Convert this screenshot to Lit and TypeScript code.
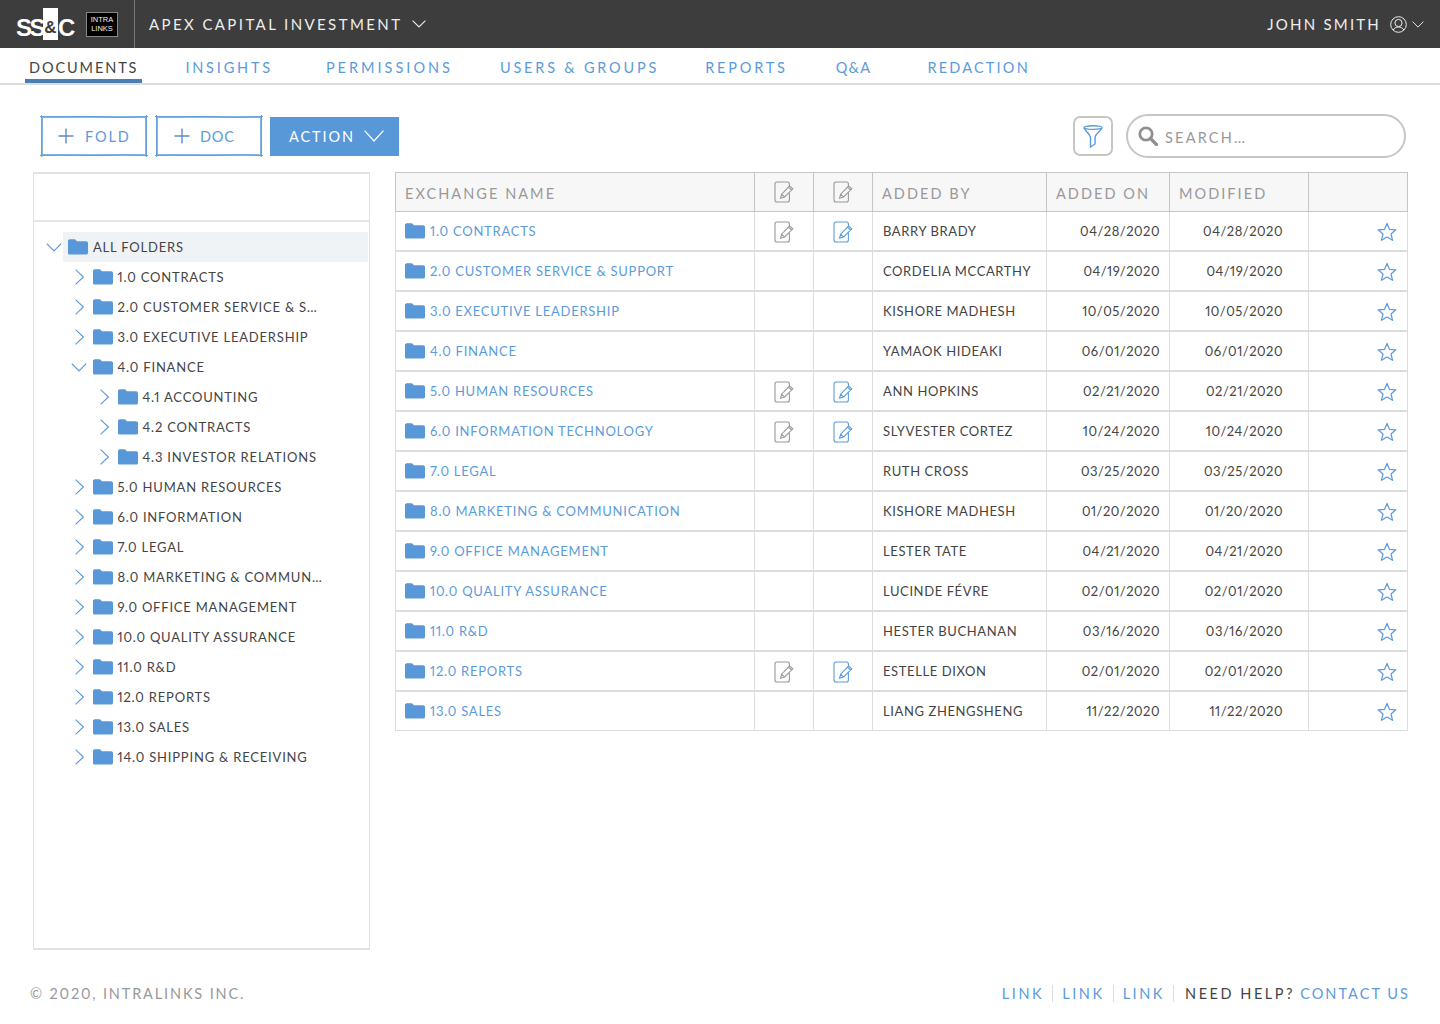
import { LitElement, html, css } from "lit";
import { customElement } from "lit/decorators.js";

const chevDown = (w = 14, h = 8) => html`<svg class="chev" width=${w} height=${h} viewBox="0 0 14 8"><path d="M.6.6 7 7 13.4.6" fill="none" stroke="currentColor" stroke-width="1.1"/></svg>`;
const folder = html`<svg class="folder" width="20" height="16" viewBox="0 0 20 16"><path d="M0 2.2C0 1 .8.3 1.8.3h4.6c.7 0 1 .3 1.4.8l1 1.1h9.3c1.2 0 1.9.8 1.9 1.9v9.6c0 1.2-.8 1.9-1.9 1.9H1.7C.7 15.6 0 15 0 14z" fill="#5898d8"/></svg>`;
const noteIcon = (c: string) => html`<svg class="note" width="20" height="22" viewBox="0 0 20 22" fill="none" stroke=${c} stroke-width="1.1"><path d="M15.4 5V3a2 2 0 0 0-2-2H3a2 2 0 0 0-2 2v16a2 2 0 0 0 2 2h10.4a2 2 0 0 0 2-2v-7"/><path d="M6.6 17.2l1-4L15.6 5l3.2 2.8-8.2 8.2zM7.6 13.2l3 3M14.4 6.2l3.2 2.8"/></svg>`;
const star = html`<svg class="star" width="20" height="20" viewBox="0 0 20 20"><path d="M10 1.4l2.5 5.9 6.4.5-4.9 4.2 1.6 6.3L10 15l-5.6 3.3L6 12 1.1 7.8l6.4-.5z" fill="none" stroke="#5b9bdc" stroke-width="1.2" stroke-linejoin="round"/></svg>`;
const plus = html`<svg width="16" height="16" viewBox="0 0 16 16"><path d="M8 .5v15M.5 8h15" stroke="#5b8fc4" stroke-width="1.4"/></svg>`;
// Hand-drawn outline laid over a button's border: each side overshoots its corners a little.
const sketch = html`<svg class="sketch" viewBox="0 0 106 40" preserveAspectRatio="none" fill="none" stroke="#5b9bdc" stroke-width="1"><path d="M-1 .6C20 1.4 40-.2 62 .8s30 .2 45-.2M.6-1C1.2 10 .2 24 .8 41M105.400-1c-.6 14 .4 27-.2 42M-1 39.400c24-.8 50 .6 72-.2s24 .2 36 .4"/></svg>`;

// label, active, letter-spacing, gap to the next tab
const tabs: [string, boolean, number, number][] = [
  ["DOCUMENTS", true, 1.9, 39],
  ["INSIGHTS", false, 2.8, 45],
  ["PERMISSIONS", false, 3.0, 39],
  ["USERS & GROUPS", false, 2.8, 38],
  ["REPORTS", false, 2.8, 40],
  ["Q&A", false, 1.2, 48],
  ["REDACTION", false, 2.2, 0],
];

type Tree = { label: string; level: number; open?: boolean; sel?: boolean };
const tree: Tree[] = [
  { label: "ALL FOLDERS", level: 0, open: true, sel: true },
  { label: "1.0 CONTRACTS", level: 1 },
  { label: "2.0 CUSTOMER SERVICE & S…", level: 1 },
  { label: "3.0 EXECUTIVE LEADERSHIP", level: 1 },
  { label: "4.0 FINANCE", level: 1, open: true },
  { label: "4.1 ACCOUNTING", level: 2 },
  { label: "4.2 CONTRACTS", level: 2 },
  { label: "4.3 INVESTOR RELATIONS", level: 2 },
  { label: "5.0 HUMAN RESOURCES", level: 1 },
  { label: "6.0 INFORMATION", level: 1 },
  { label: "7.0 LEGAL", level: 1 },
  { label: "8.0 MARKETING & COMMUN…", level: 1 },
  { label: "9.0 OFFICE MANAGEMENT", level: 1 },
  { label: "10.0 QUALITY ASSURANCE", level: 1 },
  { label: "11.0 R&D", level: 1 },
  { label: "12.0 REPORTS", level: 1 },
  { label: "13.0 SALES", level: 1 },
  { label: "14.0 SHIPPING & RECEIVING", level: 1 },
];

const rows: [string, boolean, string, string][] = [
  ["1.0 CONTRACTS", true, "BARRY BRADY", "04/28/2020"],
  ["2.0 CUSTOMER SERVICE & SUPPORT", false, "CORDELIA MCCARTHY", "04/19/2020"],
  ["3.0 EXECUTIVE LEADERSHIP", false, "KISHORE MADHESH", "10/05/2020"],
  ["4.0 FINANCE", false, "YAMAOK HIDEAKI", "06/01/2020"],
  ["5.0 HUMAN RESOURCES", true, "ANN HOPKINS", "02/21/2020"],
  ["6.0 INFORMATION TECHNOLOGY", true, "SLYVESTER CORTEZ", "10/24/2020"],
  ["7.0 LEGAL", false, "RUTH CROSS", "03/25/2020"],
  ["8.0 MARKETING & COMMUNICATION", false, "KISHORE MADHESH", "01/20/2020"],
  ["9.0 OFFICE MANAGEMENT", false, "LESTER TATE", "04/21/2020"],
  ["10.0 QUALITY ASSURANCE", false, "LUCINDE FÉVRE", "02/01/2020"],
  ["11.0 R&D", false, "HESTER BUCHANAN", "03/16/2020"],
  ["12.0 REPORTS", true, "ESTELLE DIXON", "02/01/2020"],
  ["13.0 SALES", false, "LIANG ZHENGSHENG", "11/22/2020"],
];

@customElement("app-root")
export class AppRoot extends LitElement {
  static styles = css`
    :host { display: flex; flex-direction: column; width: 1440px; height: 1024px; background: #fff; color: #444; font-family: "Lato", "Open Sans", sans-serif; font-variant-numeric: proportional-nums; overflow: hidden; }
    svg { display: block; flex: none; }

    .top { height: 48px; background: #3d3d3d; color: #eee; display: flex; align-items: center; flex: none; }
    .logo { height: 48px; display: flex; align-items: center; padding-left: 16px; box-sizing: border-box; border-right: 1px solid #777; flex: none; width: 135px; }
    .ssc { display: flex; align-items: center; height: 32px; color: #fff; font: 700 24px/32px "Liberation Sans", sans-serif; }
    .ss { width: 27px; letter-spacing: -2.4px; padding-top: 7px; }
    .c { width: 17px; padding-top: 7px; }
    .amp { width: 15px; height: 32px; background: #fff; color: #3d3d3d; font-size: 17px; padding-top: 7px; box-sizing: border-box; display: flex; align-items: center; justify-content: center; }
    .il { width: 32px; height: 25px; box-sizing: border-box; margin-left: 11px; background: #000; border: 1px solid #888; color: #eee; font: 400 7.5px/9px "Liberation Sans", sans-serif; text-align: center; display: flex; align-items: center; justify-content: center; }
    .org { margin-left: 14px; font-size: 15px; letter-spacing: 2.4px; }
    .org-chev { margin-left: 10px; }
    .user { margin-left: auto; display: flex; align-items: center; padding-right: 16px; font-size: 15px; letter-spacing: 2.2px; }
    .avatar { margin-left: 9px; }
    .user .chev { margin-left: 5px; width: 12px; }

    .nav { height: 37px; box-sizing: border-box; border-bottom: 2px solid #ddd; display: flex; flex: none; padding-left: 25px; }
    .tab { height: 35px; box-sizing: border-box; padding: 4px 4px 0; display: flex; align-items: center; font-size: 14.5px; color: #5b9bdc; white-space: nowrap; }
    .tab.on { color: #444; border-bottom: 4px solid #4a7fb5; padding-top: 7px; }

    .bar { display: flex; align-items: center; height: 44px; margin-top: 29px; padding: 0 34px 0 41px; flex: none; }
    .btn { position: relative; width: 106px; height: 40px; box-sizing: border-box; border: 2px solid #8dbce9; margin-right: 9px; padding-left: 15px; display: flex; align-items: center; gap: 11px; color: #5b9bdc; font-size: 14.5px; letter-spacing: 1.9px; }
    .sketch { position: absolute; left: -2px; top: -2px; width: calc(100% + 4px); height: calc(100% + 4px); overflow: visible; pointer-events: none; }
    .btn.doc { padding-left: 16px; gap: 10px; letter-spacing: 0.8px; }
    .btn.act { width: 129px; height: 39px; margin-left: -1px; margin-right: 0; padding-left: 17px; background: #5898d8; border-color: #5898d8; color: #fff; gap: 9px; }
    .filter { margin-left: auto; width: 40px; height: 40px; box-sizing: border-box; border: 2px solid #c6c6c6; border-radius: 7px; display: flex; align-items: center; justify-content: center; }
    .search { width: 280px; height: 44px; margin-left: 13px; box-sizing: border-box; border: 2px solid #c6c6c6; border-radius: 22px; display: flex; align-items: center; padding-left: 10px; color: #999; font-size: 14.5px; letter-spacing: 2.2px; gap: 7px; }
    .search span { padding-top: 2px; }

    .main { display: flex; align-items: flex-start; margin-top: 14px; padding-left: 33px; flex: none; }
    .side { width: 337px; height: 778px; box-sizing: border-box; border: 1px solid #e2e2e2; border-top-width: 2px; border-bottom-width: 2px; flex: none; }
    .side-head { height: 46px; border-bottom: 2px solid #e6e6e6; }
    .tree { padding-top: 10px; }
    .node { height: 30px; display: flex; align-items: center; font-size: 13px; letter-spacing: 0.8px; color: #444; position: relative; }
    .node .ch { width: 16px; display: flex; justify-content: center; color: #5b9bdc; flex: none; }
    .node .folder { margin-left: 6px; }
    .node .lbl { margin-left: 5px; white-space: nowrap; }
    .l1 .lbl, .l2 .lbl { margin-left: 4.5px; }
    .l0 { padding-left: 12px; }
    .l1 { padding-left: 37px; }
    .l2 { padding-left: 62px; }
    .sel::before { content: ""; position: absolute; left: 29px; right: 1px; top: 0; bottom: 0; background: #f0f3f6; }
    .sel > * { position: relative; }

    table { margin-left: 25px; width: 1012px; border-collapse: collapse; table-layout: fixed; }
    th { height: 39px; box-sizing: border-box; background: #f7f7f7; border: 1px solid #c6c6c6; font-weight: 400; text-align: left; color: #999; font-size: 14.5px; letter-spacing: 2.05px; padding: 2px 0 0 9px; }
    td { height: 40px; box-sizing: border-box; border: 1px solid #ddd; border-bottom-width: 2px; padding: 0 0 0 10px; font-size: 13px; letter-spacing: 0.6px; white-space: nowrap; color: #444; }
    tbody tr:first-child td { height: 39px; padding-top: 1px; }
    tr:last-child td { border-bottom-width: 1px; }
    td.nm { padding-left: 9px; letter-spacing: 0.75px; }
    .name { display: flex; align-items: center; gap: 5px; color: #5b9bdc; }
    .ic svg { margin: 0 auto; }
    th.ic, td.ic { padding: 0; }
    td.ic svg, td.st svg { margin-top: 2px; }
    td.d1 { text-align: right; padding: 0 9px 0 0; letter-spacing: 0.5px; }
    td.d2 { text-align: right; padding: 0 25px 0 0; letter-spacing: 0.5px; }
    td.st { padding: 0 10px 0 0; }
    td.st svg { margin-left: auto; }

    .foot { margin-top: auto; height: 62px; display: flex; align-items: flex-start; padding: 23px 30px 0; font-size: 14.5px; letter-spacing: 2.55px; box-sizing: border-box; flex: none; }
    .copy { color: #999; letter-spacing: 1.85px; }
    .links { margin-left: auto; display: flex; align-items: center; color: #5b9bdc; }
    .links .lk { padding-right: 8px; margin-right: 9px; border-right: 1px solid #ddd; }
    .links .help { color: #444; margin: 0 5px 0 2px; }
    .links .contact { letter-spacing: 2.05px; }
  `;

  render() {
    return html`
      <header class="top">
        <div class="logo">
          <div class="ssc"><span class="ss">SS</span><span class="amp">&amp;</span><span class="c">C</span></div>
          <div class="il"><span>INTRA<br />LINKS</span></div>
        </div>
        <div class="org">APEX CAPITAL INVESTMENT</div>
        <div class="org-chev">${chevDown()}</div>
        <div class="user">
          <span>JOHN SMITH</span>
          <svg class="avatar" width="17" height="17" viewBox="0 0 17 17" fill="none" stroke="#eee" stroke-width="1"><circle cx="8.5" cy="8.5" r="7.8"/><circle cx="8.5" cy="7" r="3.6"/><path d="M3.2 14c1-2 3-3 5.3-3s4.3 1 5.3 3"/></svg>
          ${chevDown(12, 7)}
        </div>
      </header>
      <nav class="nav">
        ${tabs.map(([t, on, ls, gap]) => html`<div class="tab ${on ? "on" : ""}" style="letter-spacing:${ls}px;margin-right:${gap}px">${t}</div>`)}
      </nav>
      <div class="bar">
        <div class="btn">${plus}<span>FOLD</span>${sketch}</div>
        <div class="btn doc">${plus}<span>DOC</span>${sketch}</div>
        <div class="btn act"><span>ACTION</span><svg width="20" height="12" viewBox="0 0 20 12"><path d="M.6.6 10 11 19.4.6" fill="none" stroke="#fff" stroke-width="1.2"/></svg></div>
        <div class="filter"><svg width="20" height="23" viewBox="0 0 20 23" fill="none" stroke="#5b9bdc" stroke-width="1.4"><ellipse cx="10" cy="2.6" rx="9" ry="1.8"/><path d="M1 3c2 4 6.5 6 6.5 10v9l4.5-3v-6c0-4 5-6 7-10"/></svg></div>
        <div class="search">
          <svg width="20" height="20" viewBox="0 0 20 20" fill="none" stroke="#8f8f8f"><circle cx="8" cy="8" r="6.2" stroke-width="2.8"/><path d="M12.5 12.5 18.5 18.5" stroke-width="3.2" stroke-linecap="round"/></svg>
          <span>SEARCH…</span>
        </div>
      </div>
      <div class="main">
        <aside class="side">
          <div class="side-head"></div>
          <div class="tree">
            ${tree.map((n) => html`<div class="node l${n.level} ${n.sel ? "sel" : ""}">
              <span class="ch">${n.open ? chevDown(16, 9) : html`<svg width="9" height="16" viewBox="0 0 9 16"><path d="M.6.6 8.4 8 .6 15.4" fill="none" stroke="currentColor" stroke-width="1.1"/></svg>`}</span>
              ${folder}<span class="lbl">${n.label}</span></div>`)}
          </div>
        </aside>
        <table>
          <colgroup><col style="width:359px" /><col style="width:59px" /><col style="width:59px" /><col style="width:174px" /><col style="width:123px" /><col style="width:139px" /><col style="width:99px" /></colgroup>
          <thead>
            <tr>
              <th>EXCHANGE NAME</th>
              <th class="ic">${noteIcon("#999")}</th>
              <th class="ic">${noteIcon("#999")}</th>
              <th>ADDED BY</th><th>ADDED ON</th><th>MODIFIED</th><th></th>
            </tr>
          </thead>
          <tbody>
            ${rows.map(([name, note, by, date]) => html`<tr>
              <td class="nm"><div class="name">${folder}<span>${name}</span></div></td>
              <td class="ic">${note ? noteIcon("#999") : ""}</td>
              <td class="ic">${note ? noteIcon("#5b9bdc") : ""}</td>
              <td>${by}</td>
              <td class="d1">${date}</td>
              <td class="d2">${date}</td>
              <td class="st">${star}</td>
            </tr>`)}
          </tbody>
        </table>
      </div>
      <footer class="foot">
        <div class="copy">© 2020, INTRALINKS INC.</div>
        <div class="links">
          <span class="lk">LINK</span><span class="lk">LINK</span><span class="lk">LINK</span>
          <span class="help">NEED HELP?</span><span class="contact">CONTACT US</span>
        </div>
      </footer>
    `;
  }
}
